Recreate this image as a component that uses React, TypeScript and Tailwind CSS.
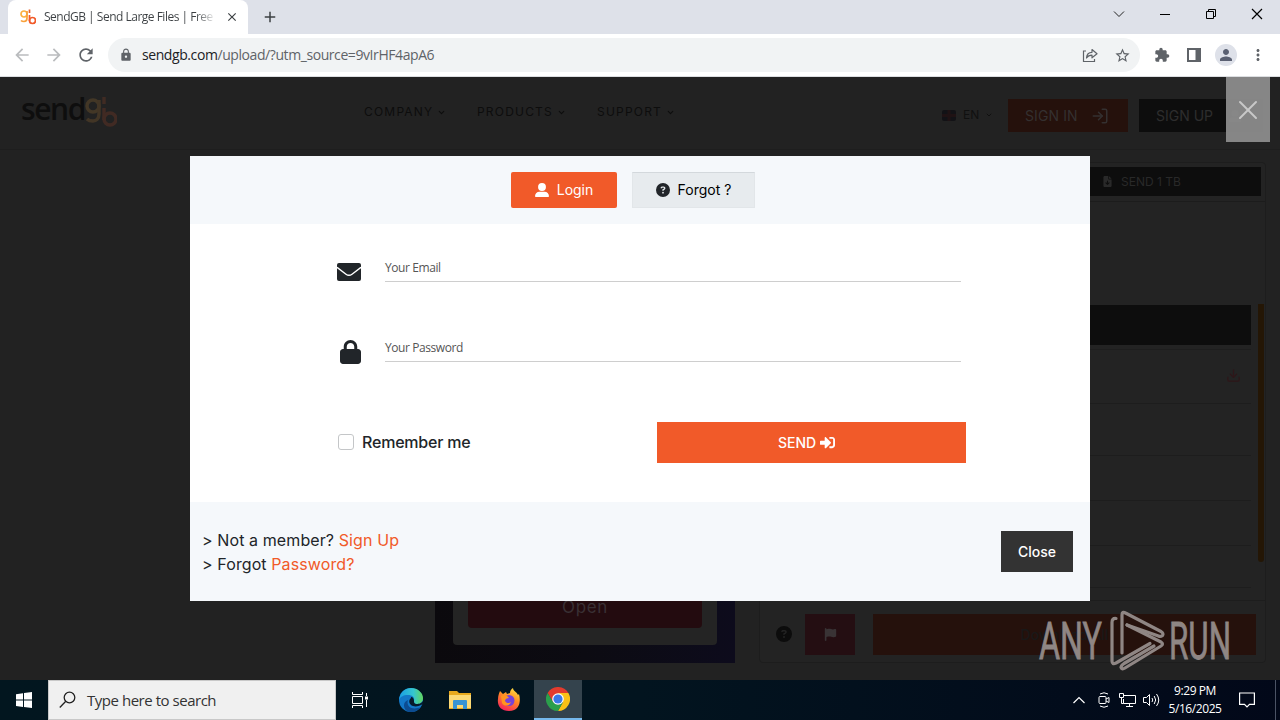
import React from "react";
import {
  MdArrowBack,
  MdArrowForward,
  MdRefresh,
  MdLock,
  MdStarBorder,
  MdExtension,
  MdPerson,
  MdMoreVert,
  MdClose,
  MdAdd,
} from "react-icons/md";
import {
  FaUserLarge,
  FaCircleQuestion,
  FaLock,
  FaFlag,
  FaFileArrowDown,
} from "react-icons/fa6";
import { FaSignInAlt } from "react-icons/fa";
import { ChevronDown, Download, LogIn, X } from "lucide-react";

const menu = [
  { label: "COMPANY", className: "w-[113px]" },
  { label: "PRODUCTS", className: "w-[120px]" },
  { label: "SUPPORT", className: "w-[90px]" },
];

const fileRows = [
  "h-[54px]",
  "h-[52px]",
  "h-[45px]",
  "h-[45px]",
  "h-[42px]",
];

function GbMark({ className }: { className?: string }) {
  return (
    <svg viewBox="0 0 32 32" className={className} fill="none" strokeWidth="3.4">
      <circle cx="8" cy="10" r="6" stroke="#fbb040" />
      <path d="M14 4v14c0 5-3 7-6 7s-5-1-6-2" stroke="#f9a13a" />
      <path d="M19 1v7" stroke="#e8622c" />
      <path d="M19 12v12" stroke="#f15a29" />
      <circle cx="25" cy="23" r="6" stroke="#f15a29" />
    </svg>
  );
}

function TabStrip() {
  return (
    <div className="flex h-[34px] bg-[#dee1e9]">
      <div className="ml-2 flex w-[240px] items-center rounded-t-lg bg-white pl-3">
        <GbMark className="h-4 w-4 shrink-0" />
        <span className="ml-2 w-[172px] bg-linear-to-r from-[#3c4043] from-88% to-transparent bg-clip-text text-[12px] tracking-[-0.5px] whitespace-nowrap text-transparent">
          SendGB | Send Large Files | Free t
        </span>
        <MdClose className="ml-[9px] h-[14px] w-[14px] text-[#3c4043]" />
      </div>
      <MdAdd className="mt-2 ml-[13px] h-[18px] w-[18px] text-[#3c4043]" />
      <div className="mr-[17px] ml-auto flex items-center pb-[6px]">
        <svg width="12" height="12" viewBox="0 0 12 12" fill="none" stroke="#222">
          <path d="M1 3.5l5 5 5-5" />
        </svg>
        <svg className="ml-[34px]" width="12" height="12" viewBox="0 0 12 12" stroke="#000">
          <path d="M1 6.5h10" />
        </svg>
        <svg className="ml-[34px]" width="12" height="12" viewBox="0 0 12 12" fill="none" stroke="#000">
          <path d="M1.500 3.500h7v7h-7zM3.500 3.500v-2h7v7h-2" />
        </svg>
        <svg className="ml-[34px]" width="12" height="12" viewBox="0 0 12 12" stroke="#000" strokeWidth="1.200">
          <path d="M1 1l10 10M11 1L1 11" />
        </svg>
      </div>
    </div>
  );
}

function Toolbar() {
  return (
    <div className="flex h-[43px] items-center border-b border-[#dcdee1] bg-white pl-3 text-[#5f6368]">
      <MdArrowBack className="h-5 w-5 text-[#babcbe]" />
      <MdArrowForward className="ml-3 h-5 w-5 text-[#babcbe]" />
      <MdRefresh className="ml-3 h-5 w-5" />
      <div className="ml-3 flex h-[34px] w-[1032px] items-center rounded-full bg-[#f1f3f4] pr-[9px] pl-[11px]">
        <MdLock className="h-[14px] w-[14px]" />
        <p className="ml-[9px] text-[14px] leading-5 tracking-[-0.42px] whitespace-nowrap">
          <span className="text-[#202124]">sendgb.com</span>/upload/?utm_source=9vIrHF4apA6
        </p>
        <svg className="ml-auto" width="16" height="16" viewBox="0 0 16 16" fill="none" stroke="#5f6368" strokeWidth="1.200">
          <path d="M4 4H1.500v10.500h11V12" />
          <path d="M4.500 11c.3-4 2.500-5.700 5.500-5.700V2.500l5 4.300-5 4V8.200c-2.500 0-4.200.7-5.500 2.800z" strokeLinejoin="round" />
        </svg>
        <MdStarBorder className="ml-4 h-[17px] w-[17px]" />
      </div>
      <MdExtension className="ml-[14px] h-4 w-4" />
      <svg className="ml-4" width="16" height="16" viewBox="0 0 16 16" fill="none" stroke="#5f6368" strokeWidth="2">
        <path d="M2 2h12v12H2z" />
        <path d="M12 2v12" strokeWidth="5" />
      </svg>
      <span className="ml-[13px] flex h-[22px] w-[22px] items-center justify-center rounded-full bg-[#dee1e9] text-[#5a6072]">
        <MdPerson className="h-[18px] w-[18px]" />
      </span>
      <MdMoreVert className="ml-3 h-[18px] w-[18px]" />
    </div>
  );
}

function SiteHeader() {
  return (
    <header className="flex h-[73px] border-b border-[#1e1e1e]">
      <div className="flex w-[342px] pt-4 pl-[21px]">
        <span className="font-['Open_Sans'] text-[30px] leading-[32px] font-semibold tracking-[-1.4px] text-[#0e0e0e]">
          send
        </span>
        <GbMark className="mt-[3px] h-8 w-8 opacity-15" />
      </div>
      <nav className="flex h-[70px] w-[600px] items-center pl-[22px] text-[12px] tracking-[1.2px] text-[#0d0d0d]">
        {menu.map((item) => (
          <div key={item.label} className={`${item.className} flex items-center gap-1 whitespace-nowrap`}>
            {item.label}
            <ChevronDown className="h-[9px] w-[9px] shrink-0" strokeWidth={3} />
          </div>
        ))}
      </nav>
      <div className="flex pt-[22px]">
        <div className="flex h-8 w-[66px] items-center text-[12px] text-[#101010]">
          <svg width="14" height="11" viewBox="0 0 14 11">
            <rect width="14" height="11" rx="2" fill="#121216" />
            <path d="M0 5.500h14M7 0v11" stroke="#1f1214" strokeWidth="3" />
          </svg>
          <span className="ml-[7px]">EN</span>
          <ChevronDown className="ml-[6px] h-2 w-2" strokeWidth={3} />
        </div>
        <div className="flex h-[33px] w-[120px] items-center bg-[#25110c] pl-[17px] text-[14px] tracking-[0.1px] text-[#343030]">
          SIGN IN
          <LogIn className="ml-[13px] h-[18px] w-[18px]" />
        </div>
        <div className="ml-[11px] flex h-[33px] w-[124px] items-center bg-[#0d0d0d] pl-[17px] text-[14px] text-[#2d2d2d]">
          SIGN UP
          <FaUserLarge className="ml-4 h-3 w-3" />
        </div>
      </div>
    </header>
  );
}

function TransferCard() {
  return (
    <div className="mt-3 ml-6 flex h-[501px] w-[507px] flex-col rounded-sm border border-[#1d1d1d] bg-[#232323]">
      <div className="mt-1 mr-1 ml-1 flex h-[29px] items-center bg-[#0d0d0d] pl-[338px] text-[12px] text-[#292929]">
        <FaFileArrowDown className="mr-2 h-[11px] w-[11px]" />
        SEND 1 TB
      </div>
      <div className="mt-[5px] h-[103px] border-t border-[#1c1c1c]" />
      <div className="flex h-[296px] justify-between">
        <div className="ml-3 w-[479px]">
          <div className="mt-px h-10 bg-[#0d0d0d]" />
          <div className="mt-1 border-t border-[#1e1e1e]">
            {fileRows.map((height, i) => (
              <div key={i} className={`${height} flex justify-end border-b border-[#1d1d1d] pt-[18px] pr-[10px]`}>
                {i === 0 && <Download className="h-[15px] w-[15px] text-[#2e1619]" />}
              </div>
            ))}
          </div>
        </div>
        <div className="mr-px h-[258px] w-[6px] rounded-b-sm bg-[#241605]" />
      </div>
      <div className="flex h-[60px] items-center border-t border-[#1d1d1d] pb-px pl-4">
        <FaCircleQuestion className="mt-2 h-4 w-4 text-[#0c0c0c]" />
        <div className="mt-2 ml-[13px] flex h-[41px] w-[50px] items-center justify-center bg-[#240e12] text-[#393335]">
          <FaFlag className="h-[13px] w-[13px]" />
        </div>
        <div className="mt-2 ml-[18px] flex h-[41px] w-[383px] items-center justify-center bg-[#25110c] text-[14px] font-medium text-[#191818]">
          Download All
        </div>
      </div>
    </div>
  );
}

function PromoBanner() {
  return (
    <div className="mt-3 ml-[435px] h-[501px] w-[300px] bg-linear-to-r from-[#0b090d] via-[#0c0b12] to-[#0d0b1c] px-[18px] pb-[18px]">
      <div className="flex h-full flex-col justify-end rounded-b bg-[#242424] px-[15px] pb-[17px]">
        <div className="flex h-[43px] items-center justify-center rounded bg-[#230b0f] pt-[2px] text-[17px] tracking-[0.6px] text-[#393034]">
          Open
        </div>
      </div>
    </div>
  );
}

function EnvelopeIcon() {
  return (
    <svg width="24" height="18" viewBox="0 0 24 18" fill="none">
      <rect width="24" height="18" rx="2" fill="currentColor" />
      <path d="M0 4.300l9 6.900q3 2.200 6 0l9-6.900" stroke="#fff" strokeWidth="1.400" />
    </svg>
  );
}

function Field({ icon, label }: { icon: React.ReactNode; label: string }) {
  return (
    <div className="flex h-20">
      <div className="flex h-[60px] w-[48px] items-center pt-[3px] text-[#212529]">{icon}</div>
      <label className="h-[42px] w-[576px] border-b border-[#cecece] pt-5 font-['Open_Sans','Noto_Sans',sans-serif] text-[12px] leading-4 tracking-[-0.42px] text-[#555]">
        {label}
      </label>
    </div>
  );
}

function LoginModal() {
  return (
    <div className="w-[900px] bg-white text-[#212529]">
      <div className="flex h-[68px] justify-center gap-[15px] bg-[#f5f8fb] pt-4 pr-[14px] text-[14px]">
        <button className="flex h-9 w-[106px] items-center justify-center gap-2 rounded-[2px] bg-[#f15a29] pb-px text-white">
          <FaUserLarge className="mt-px h-[14px] w-[14px]" />
          Login
        </button>
        <button className="flex h-9 w-[123px] items-center justify-center gap-2 border border-[#e2e6e9] border-t-[#d3d8dc] bg-[#e7ebee] pb-px text-black">
          <FaCircleQuestion className="mt-px h-[14px] w-[14px] text-[#212529]" />
          Forgot ?
        </button>
      </div>
      <div className="h-[278px] pt-4 pl-[147px]">
        <Field icon={<EnvelopeIcon />} label="Your Email" />
        <Field icon={<FaLock className="ml-[3px] h-6 w-[21px]" />} label="Your Password" />
        <div className="mt-[22px] flex items-center">
          <span className="mb-[2px] ml-px h-4 w-4 rounded-[3px] border border-[#c4c6c8] bg-white" />
          <span className="mb-[2px] ml-2 w-[303px] text-[16px] leading-6 font-medium tracking-[-0.2px]">Remember me</span>
          <button className="-ml-[8px] flex h-[41px] w-[309px] items-center justify-center gap-1 bg-[#f15a29] pr-[10px] text-[14px] font-medium text-white">
            SEND
            <FaSignInAlt className="h-[15px] w-[15px]" />
          </button>
        </div>
      </div>
      <div className="flex h-[99px] items-center justify-between bg-[#f5f8fb] pr-[17px] pl-3">
        <div className="text-[16px] leading-6 tracking-[0.1px]">
          <p>
            &gt; Not a member? <a className="text-[#f15a29]">Sign Up</a>
          </p>
          <p>
            &gt; Forgot <a className="text-[#f15a29]">Password?</a>
          </p>
        </div>
        <button className="h-[41px] w-[72px] bg-[#333] text-[14px] font-medium text-white">Close</button>
      </div>
    </div>
  );
}

function Watermark() {
  return (
    <svg width="193" height="62" viewBox="0 0 193 62" fill="none" className="overflow-visible font-['Roboto',sans-serif]">
      <g fill="#8f8684" stroke="#8f8684" strokeWidth=".8" fontSize="51">
        <text x="0" y="49" textLength="63" lengthAdjust="spacingAndGlyphs">ANY</text>
        <text x="130" y="49" textLength="62" lengthAdjust="spacingAndGlyphs">RUN</text>
      </g>
      <g stroke="#8f8684" strokeWidth="3.200" strokeLinejoin="round" strokeLinecap="round">
        <path d="M77 8.500q-4-.5-4 4V51q0 4 4 2l34-19.500" />
        <path d="M83 43V5q0-4 3.500-2L122 21.500q3 2 1.500 4-2 1.500-4 .5L88 15" />
        <path d="M88 15l34 17q3 2 0 4L86 58q-3 2-4-.5 0-2 3-4l30-17.500" />
      </g>
    </svg>
  );
}

function EdgeIcon() {
  return (
    <svg width="24" height="24" viewBox="0 0 24 24" className="ml-[23px]">
      <defs>
        <linearGradient id="edgeTop" x1="0" x2="1">
          <stop stopColor="#199ee5" />
          <stop offset=".6" stopColor="#35c6d0" />
          <stop offset="1" stopColor="#63d65c" />
        </linearGradient>
      </defs>
      <circle cx="12" cy="12" r="12" fill="#1378c8" />
      <path d="M0 12C1 4 6 0 12 0c7 0 12 5 12 10 0 4-3 6-6 6-3 0-4-1-3-3 1-4-2-6-6-6C4 7 1 9 0 12z" fill="url(#edgeTop)" />
      <path d="M9 12c-2 6 3 11 13 7-3 4-8 6-12 5-6-2-7-10-1-12z" fill="#0c4c91" />
      <path d="M12 10c-3 2-2 7 2 8 3 1 6 0 8-1l2-1v-3c-2 3-5 3-7 3-2-.5-2-2-2-3 0-2-1-4-3-4z" fill="#071b2b" />
    </svg>
  );
}

function FolderIcon() {
  return (
    <svg width="22" height="20" viewBox="0 0 22 20" className="ml-[26px]">
      <path d="M0 1h8l2 2h12v16H0z" fill="#e8a91d" />
      <path d="M0 5h22v13H0z" fill="#fcd975" />
      <path d="M4 19v-8q0-1 1-1h12q1 0 1 1v8h-4v-4H8v4z" fill="#3794d4" />
    </svg>
  );
}

function FirefoxIcon() {
  return (
    <svg width="24" height="24" viewBox="0 0 24 24" className="ml-[26px]">
      <defs>
        <linearGradient id="fox" x1=".8" y1="0" x2=".3" y2="1">
          <stop stopColor="#ffe444" />
          <stop offset=".45" stopColor="#ff8a24" />
          <stop offset="1" stopColor="#f4215d" />
        </linearGradient>
      </defs>
      <path d="M3 3l3 3 3-2 1 2 3-1c0-2 1-4 3-5 0 3 4 4 5 7l1-1c2 7 1 17-10 17C4 23 0 18 1 11c0-3 1-6 2-8z" fill="url(#fox)" />
      <circle cx="12" cy="12.500" r="5.500" fill="#7542d9" />
      <path d="M4 8c3-2 6-1 8 2-2 0-4 1-4 3 1 2 4 3 6 1-1 4-7 5-9 1z" fill="#ff9420" />
    </svg>
  );
}

function ChromeIcon() {
  return (
    <svg width="24" height="24" viewBox="0 0 24 24">
      <path d="M12 6h10.400A12 12 0 0 1 12 24l5-9z" fill="#fbc116" />
      <path d="M1.600 6A12 12 0 0 1 22.400 6H12l-5 9z" fill="#e33b2e" />
      <path d="M1.600 6L7 15l5 3 5-3-5 9A12 12 0 0 1 1.600 6z" fill="#2b9f4b" />
      <circle cx="12" cy="12" r="5.800" fill="#fff" />
      <circle cx="12" cy="12" r="4.600" fill="#3b78e7" />
    </svg>
  );
}

function Taskbar() {
  return (
    <div className="flex h-10 bg-linear-to-r from-[#02161f] via-[#02141f] to-[#020819]">
      <div className="flex w-12 items-center justify-center">
        <svg width="16" height="16" viewBox="0 0 16 16" fill="#fff">
          <path d="M0 2.200L7 1.200v6.400H0zM8 1l8-1v7.600H8zM0 8.500h7v6.400l-7-1zM8 8.500h8V16l-8-1.100z" />
        </svg>
      </div>
      <div className="flex w-[288px] items-center border border-[#c8c8c8] bg-[#f0f0f0] pl-[10px] text-[#333]">
        <svg width="18" height="18" viewBox="0 0 18 18" fill="none" stroke="#222" strokeWidth="1.300">
          <circle cx="10.500" cy="6.500" r="5.300" />
          <path d="M6.800 10.300L.8 16.500" />
        </svg>
        <span className="ml-[10px] text-[15px] tracking-[-0.47px]">Type here to search</span>
      </div>
      <div className="flex items-center">
        <svg className="ml-4" width="16" height="16" viewBox="0 0 16 16" fill="none" stroke="#fff">
          <path d="M.5 0v2.500h10V0M.5 16v-2.500h10V16M.5 4.500h10v7H.5zM14.500 1v3M14.500 8v7" />
          <path d="M13 6h3" strokeWidth="3" />
        </svg>
        <div className="ml-2">
          <EdgeIcon />
        </div>
        <FolderIcon />
        <FirefoxIcon />
        <div className="ml-[13px] flex h-10 w-12 items-center justify-center border-b-2 border-[#76b9ed] bg-[#34434d]">
          <ChromeIcon />
        </div>
      </div>
      <div className="ml-auto flex items-center">
        <svg width="12" height="8" viewBox="0 0 12 8" fill="none" stroke="#fff" strokeWidth="1.200">
          <path d="M.5 7L6 1.500 11.500 7" />
        </svg>
        <svg className="ml-[13px]" width="12" height="16" viewBox="0 0 12 16" fill="none" stroke="#fff">
          <rect x="1" y="4.500" width="7" height="7" rx="1" />
          <path d="M8 7l3-1.500v5L8 9M2 2q4-2.500 8 0M2 14q4 2.500 8 0" />
        </svg>
        <svg className="ml-[9px]" width="17" height="16" viewBox="0 0 17 16" fill="none" stroke="#fff">
          <path d="M5 3.500h11.500v8H4.500V7M10.500 11.500v3M7 14.500h7M.5 1.500h4v4h-4zM2.500 5.500v6h2" />
        </svg>
        <svg className="ml-[7px]" width="17" height="16" viewBox="0 0 17 16" fill="none" stroke="#fff">
          <path d="M.5 5.500h3l3-3v11l-3-3h-3zM9 6q1.500 2 0 4M11.200 4q3 4 0 8M13.500 2q4.500 6 0 12" />
        </svg>
        <div className="ml-[2px] w-[66px] text-center text-[12px] leading-[18px] tracking-[-0.42px] whitespace-nowrap text-white">
          <p>9:29 PM</p>
          <p>5/16/2025</p>
        </div>
        <svg className="ml-[11px]" width="16" height="16" viewBox="0 0 16 16" fill="none" stroke="#fff" strokeWidth="1.200">
          <path d="M.6 1h14.800v11.400H10.500L8 15l-2.500-2.600H.6z" />
        </svg>
        <div className="ml-5 h-10 w-[5px] border-l border-[#4b5365]" />
      </div>
    </div>
  );
}

export default function App() {
  return (
    <div className="flex h-[720px] w-[1280px] flex-col overflow-hidden font-['Open_Sans','Noto_Sans',sans-serif]">
      <TabStrip />
      <Toolbar />
      <main className="relative h-[603px] bg-[#222] font-['Inter',sans-serif]">
        <SiteHeader />
        <div className="flex">
          <PromoBanner />
          <TransferCard />
        </div>
        <div className="absolute inset-0 flex items-start justify-center pt-[79px]">
          <LoginModal />
        </div>
        <button className="absolute top-0 right-[10px] flex h-[65px] w-11 items-center justify-center bg-[#8c8c8c]/95 text-[#c8c8c8]">
          <X className="h-8 w-8" strokeWidth={1.500} />
        </button>
        <div className="absolute right-[48px] bottom-2">
          <Watermark />
        </div>
      </main>
      <Taskbar />
    </div>
  );
}
